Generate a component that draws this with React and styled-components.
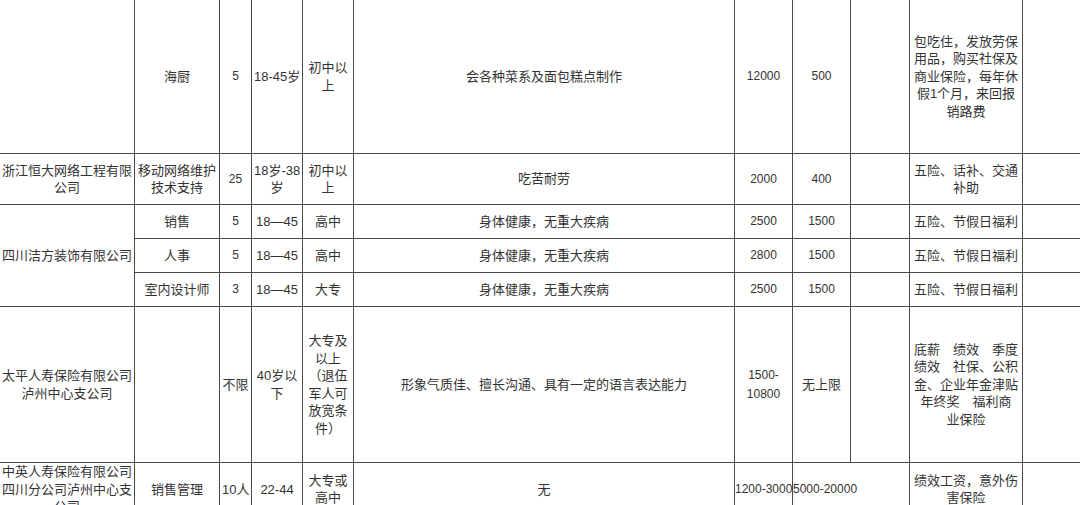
import React from "react";
import styled, { createGlobalStyle } from "styled-components";

const Global = createGlobalStyle`
  html, body { margin: 0; padding: 0; background: #fff; overflow: hidden; }
  body { width: 1080px; height: 505px; }
`;

const Sheet = styled.table`
  border-collapse: collapse;
  table-layout: fixed;
  width: 1102px;
  margin: -1px 0 0 -1px;
  font-family: "Liberation Sans", "Noto Sans CJK SC", sans-serif;
  font-size: 13px;
  line-height: 17.5px;
  color: #333;
`;

const Col = styled.col`
  width: ${(p) => p.$w}px;
`;

const Row = styled.tr`
  height: ${(p) => p.$h}px;
`;

const Cell = styled.td`
  border: 1px solid #4a4a4a;
  padding: 0 2px;
  text-align: ${(p) => (p.$left ? "left" : "center")};
  vertical-align: middle;
  white-space: nowrap;
  overflow: visible;
  ${(p) => (p.$left ? "padding: 0;" : "")}
`;

const Num = styled.span`
  font-size: 12px;
`;

const Lines = ({ items }) =>
  items.map((t, i) => (
    <React.Fragment key={i}>
      {i > 0 && <br />}
      {t}
    </React.Fragment>
  ));

const widths = [135, 85, 32, 51, 51, 381, 58, 58, 59, 113, 80];

export default function App() {
  return (
    <>
      <Global />
      <Sheet>
        <colgroup>
          {widths.map((w, i) => (
            <Col key={i} $w={w} />
          ))}
        </colgroup>
        <tbody>
          <Row $h={154}>
            <Cell />
            <Cell>海厨</Cell>
            <Cell><Num>5</Num></Cell>
            <Cell>18-45岁</Cell>
            <Cell><Lines items={["初中以", "上"]} /></Cell>
            <Cell>会各种菜系及面包糕点制作</Cell>
            <Cell><Num>12000</Num></Cell>
            <Cell><Num>500</Num></Cell>
            <Cell />
            <Cell>
              <Lines
                items={[
                  "包吃住，发放劳保",
                  "用品，购买社保及",
                  "商业保险，每年休",
                  "假1个月，来回报",
                  "销路费",
                ]}
              />
            </Cell>
            <Cell />
          </Row>
          <Row $h={51}>
            <Cell><Lines items={["浙江恒大网络工程有限", "公司"]} /></Cell>
            <Cell><Lines items={["移动网络维护", "技术支持"]} /></Cell>
            <Cell><Num>25</Num></Cell>
            <Cell><Lines items={["18岁-38", "岁"]} /></Cell>
            <Cell><Lines items={["初中以", "上"]} /></Cell>
            <Cell>吃苦耐劳</Cell>
            <Cell><Num>2000</Num></Cell>
            <Cell><Num>400</Num></Cell>
            <Cell />
            <Cell><Lines items={["五险、话补、交通", "补助"]} /></Cell>
            <Cell />
          </Row>
          <Row $h={34}>
            <Cell rowSpan={3}>四川洁方装饰有限公司</Cell>
            <Cell>销售</Cell>
            <Cell><Num>5</Num></Cell>
            <Cell>18—45</Cell>
            <Cell>高中</Cell>
            <Cell>身体健康，无重大疾病</Cell>
            <Cell><Num>2500</Num></Cell>
            <Cell><Num>1500</Num></Cell>
            <Cell />
            <Cell>五险、节假日福利</Cell>
            <Cell />
          </Row>
          <Row $h={34}>
            <Cell>人事</Cell>
            <Cell><Num>5</Num></Cell>
            <Cell>18—45</Cell>
            <Cell>高中</Cell>
            <Cell>身体健康，无重大疾病</Cell>
            <Cell><Num>2800</Num></Cell>
            <Cell><Num>1500</Num></Cell>
            <Cell />
            <Cell>五险、节假日福利</Cell>
            <Cell />
          </Row>
          <Row $h={34}>
            <Cell>室内设计师</Cell>
            <Cell><Num>3</Num></Cell>
            <Cell>18—45</Cell>
            <Cell>大专</Cell>
            <Cell>身体健康，无重大疾病</Cell>
            <Cell><Num>2500</Num></Cell>
            <Cell><Num>1500</Num></Cell>
            <Cell />
            <Cell>五险、节假日福利</Cell>
            <Cell />
          </Row>
          <Row $h={156}>
            <Cell><Lines items={["太平人寿保险有限公司", "泸州中心支公司"]} /></Cell>
            <Cell />
            <Cell>不限</Cell>
            <Cell><Lines items={["40岁以", "下"]} /></Cell>
            <Cell>
              <Lines items={["大专及", "以上", "（退伍", "军人可", "放宽条", "件）"]} />
            </Cell>
            <Cell>形象气质佳、擅长沟通、具有一定的语言表达能力</Cell>
            <Cell><Num><Lines items={["1500-", "10800"]} /></Num></Cell>
            <Cell>无上限</Cell>
            <Cell />
            <Cell>
              <Lines
                items={[
                  "底薪　绩效　季度",
                  "绩效　社保、公积",
                  "金、企业年金津贴",
                  "年终奖　福利商",
                  "业保险",
                ]}
              />
            </Cell>
            <Cell />
          </Row>
          <Row $h={52}>
            <Cell>
              <Lines items={["中英人寿保险有限公司", "四川分公司泸州中心支", "公司"]} />
            </Cell>
            <Cell>销售管理</Cell>
            <Cell>10人</Cell>
            <Cell>22-44</Cell>
            <Cell><Lines items={["大专或", "高中"]} /></Cell>
            <Cell>无</Cell>
            <Cell $left><Num>1200-3000</Num></Cell>
            <Cell $left colSpan={2}><Num>5000-20000</Num></Cell>
            <Cell><Lines items={["绩效工资，意外伤", "害保险"]} /></Cell>
            <Cell />
          </Row>
        </tbody>
      </Sheet>
    </>
  );
}
